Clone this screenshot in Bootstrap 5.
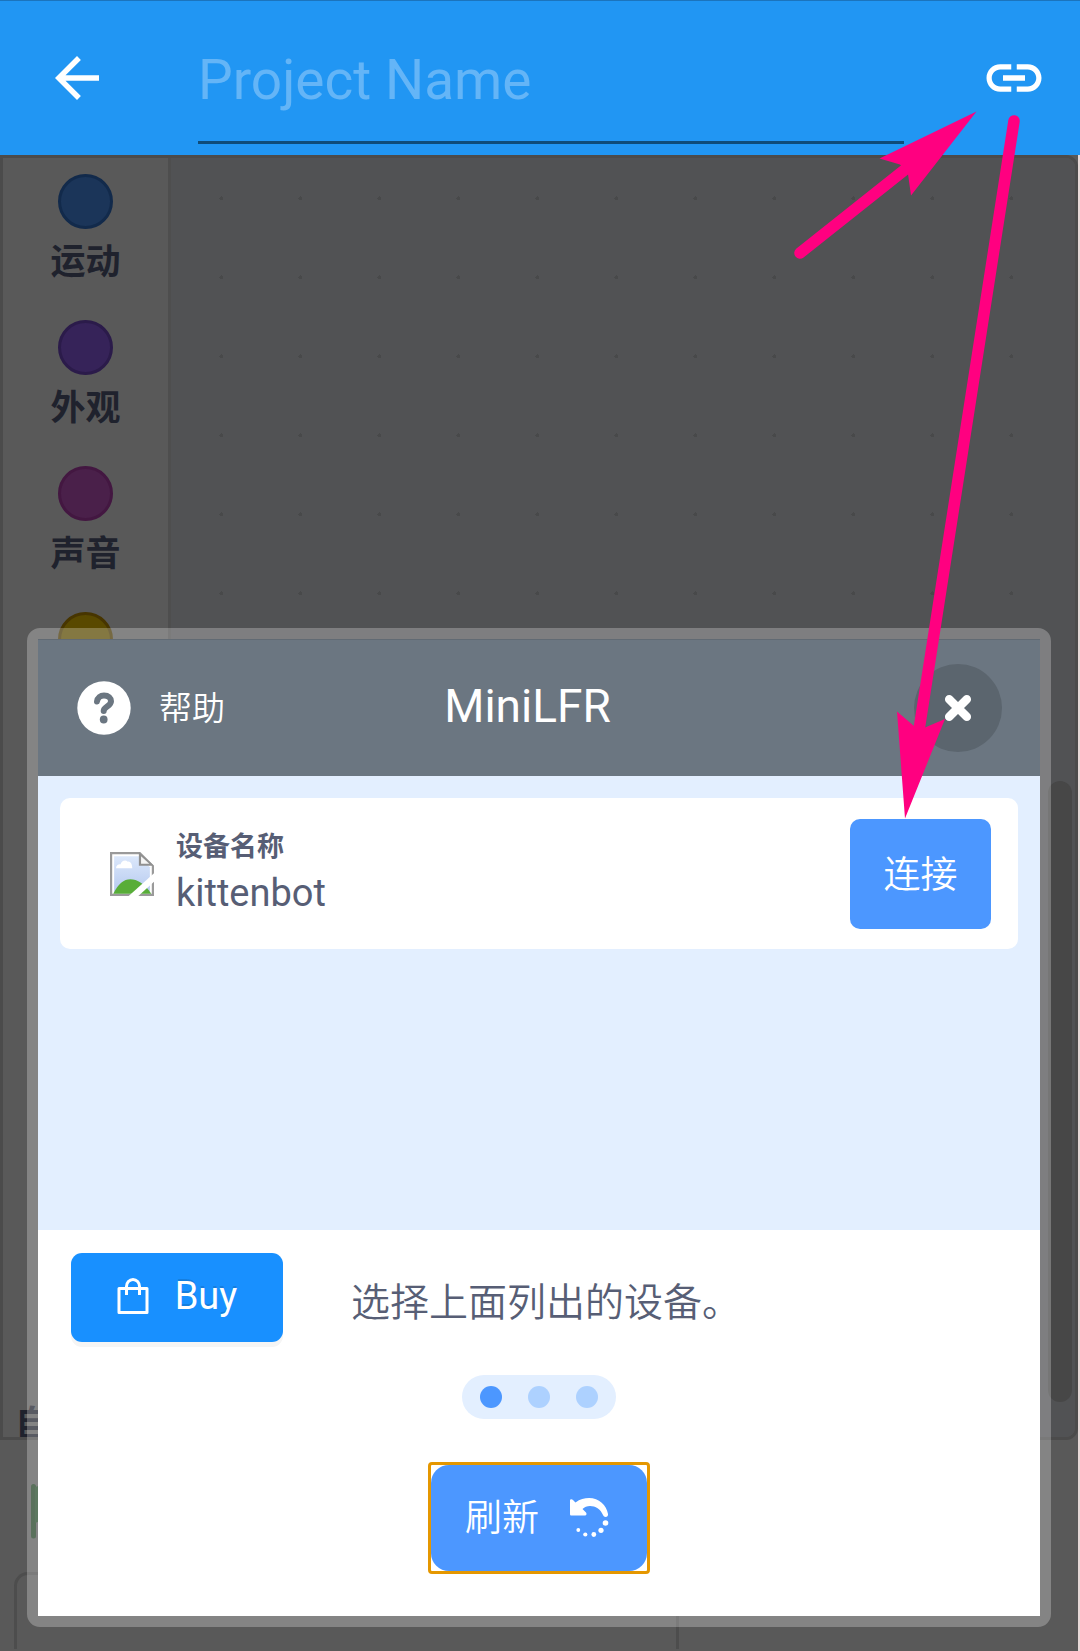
<!DOCTYPE html>
<html lang="zh-CN">
<head>
<meta charset="utf-8">
<meta name="viewport" content="width=device-width, initial-scale=1">
<title>Project</title>
<link href="https://cdn.jsdelivr.net/npm/bootstrap@5.3.0/dist/css/bootstrap.min.css" rel="stylesheet">
<style>
body{font-family:Roboto,"Noto Sans CJK SC",sans-serif;background:#e8d9d8;color:#575e75}
svg{display:block}
.screen{min-height:100vh}
.topbar{height:155px;background:#2196f3;border-top:1px solid #1b74bd;padding:0 33px 0 44px}
.topbar .btn{line-height:1}
.project-name{height:88px;min-width:0;font-size:55px;padding:0 0 38px;color:#fff;background:none;border:0;border-bottom:3px solid #0f4c79;border-radius:0;margin:44px 77px 0 88px}
.project-name:focus{background:none;box-shadow:none}
.project-name::placeholder{color:#64b5f7;opacity:1}
.editor{background:#595959;margin-right:2px}
.blocks{border:3px solid #4b4b4b;border-radius:0 12px 12px 0;min-height:1285px}
.toolbox{width:168px;border-right:3px solid #4e4e4e;padding-top:16px}
.category{height:146px;font-size:35px;line-height:52px;color:#1f222d;font-weight:700;text-decoration:none}
.swatch-dot{width:55px;height:55px;border:3px solid;border-radius:50%;margin-bottom:8px}
.motion{background:#1b3559;border-color:#122a4b}
.looks{background:#362359;border-color:#2b1b4a}
.sounds{background:#4a204a;border-color:#431741}
.events{background:#594900;border-color:#473500}
.own-blocks{font-size:35px;line-height:24px;font-weight:700;color:#1f222d;padding-left:12px}
.canvas-grid{background:#515254 radial-gradient(circle,#48494a 2px,transparent 2px) 11px 1px/79px 79px;padding-right:3px}
.canvas-grid .thumb{width:24px;height:621px;border-radius:12px;background:#474747;margin-top:623px}
.stage{height:211px;padding:42px 0 0 14px}
.stage svg{margin-left:17px}
.stage-pane{width:665px;height:77px;margin-top:31px;border:3px solid #4d4d4d;border-bottom:0;border-top-left-radius:14px}
.sheet-wrap{left:27px;right:29px;bottom:24px}
.sheet{border:11px solid rgba(255,255,255,.26);border-radius:13px;background-clip:padding-box}
.sheet-head{height:137px;background:#6b7681;color:#fff;padding:0 38px 0 39px;border-top:1px solid #616a73}
.help-btn{font-size:33px;font-weight:350;line-height:1;color:#fff;gap:28px;width:240px}
.sheet-title{font-size:46px;line-height:1;padding:0 24px 4px 0;font-weight:400}
.close-wrap{width:240px}
.round-close{width:88px;height:88px;border-radius:50%;background:#5b656e}
.device-list{min-height:454px;background:#e3efff;padding:22px}
.device{background:#fff;border-radius:10px;height:151px;padding:0 27px 0 50px;gap:22px}
.device-text{padding-top:3px}
.device-label{font-size:27px;line-height:36px;font-weight:700}
.device-name{font-size:38px;line-height:56px}
.act{background:#4c97ff;color:#fff;border:0;font-size:37px;font-weight:350;line-height:1}
.act:hover{background:#4280d7;color:#fff}
.connect{width:141px;height:110px;border-radius:10px}
.sheet-foot{background:#fff;height:386px;padding-top:23px}
.foot-row{padding-left:33px;gap:68px}
.buy{width:212px;height:89px;border-radius:11px;background:#1890ff;color:#fff;border:0;font-size:38px;line-height:1;gap:26px;box-shadow:0 5px 0 #f5f5f5;text-shadow:0 -2px 0 rgba(0,0,0,.12);padding:0 0 4px}
.buy:hover{background:#40a9ff;color:#fff}
.hint{font-size:39px;font-weight:350;line-height:44px;padding-top:10px}
.steps{width:154px;height:44px;border-radius:22px;background:#e3efff;gap:26px;margin-top:33px}
.steps i{width:22px;height:22px;border-radius:50%;background:#add1ff}
.steps .now{background:#4c97ff}
.refresh{width:216px;height:106px;border-radius:18px;gap:30px}
.ring{border-radius:1px;outline:3px solid #e59700}
.ring-box{margin-top:46px}
.marks{z-index:5;pointer-events:none;width:240px;right:50px;top:100px}
</style>
<script src="https://cdn.jsdelivr.net/npm/bootstrap@5.3.0/dist/js/bootstrap.bundle.min.js"></script>
</head>
<body>
<div class="screen d-flex flex-column position-relative">
  <header class="topbar d-flex align-items-center">
    <button class="btn p-0 border-0" type="button" aria-label="Back">
      <svg width="66" height="66" viewBox="0 0 24 24" fill="#fff"><path d="M20 11H7.830l5.590-5.590L12 4l-8 8 8 8 1.410-1.410L7.830 13H20v-2z"/></svg>
    </button>
    <input class="project-name form-control flex-grow-1 w-auto" type="text" placeholder="Project Name" aria-label="Project Name">
    <button class="btn p-0 border-0" type="button" aria-label="Link">
      <svg width="66" height="66" viewBox="0 0 24 24" fill="#fff"><path d="M3.900 12c0-1.710 1.390-3.100 3.100-3.100h4V7H7c-2.760 0-5 2.240-5 5s2.240 5 5 5h4v-1.900H7c-1.710 0-3.100-1.390-3.100-3.100zM8 13h8v-2H8v2zm9-6h-4v1.900h4c1.710 0 3.100 1.390 3.100 3.100s-1.390 3.100-3.100 3.100h-4V17h4c2.760 0 5-2.240 5-5s-2.240-5-5-5z"/></svg>
    </button>
  </header>

  <main class="editor flex-grow-1 d-flex flex-column">
    <div class="blocks flex-grow-1 d-flex overflow-hidden">
      <nav class="toolbox d-flex flex-column flex-shrink-0" aria-label="Blocks">
        <a class="category d-flex flex-column align-items-center" href="#"><span class="swatch-dot motion"></span>运动</a>
        <a class="category d-flex flex-column align-items-center" href="#"><span class="swatch-dot looks"></span>外观</a>
        <a class="category d-flex flex-column align-items-center" href="#"><span class="swatch-dot sounds"></span>声音</a>
        <a class="category d-flex flex-column align-items-center" href="#" aria-label="Events"><span class="swatch-dot events"></span></a>
        <div class="own-blocks mt-auto">自</div>
      </nav>
      <div class="canvas-grid flex-grow-1 d-flex justify-content-end">
        <div class="thumb"></div>
      </div>
    </div>
    <div class="stage">
      <svg width="50" height="59" viewBox="0 0 50 59"><path d="M2.500 4.500V54" stroke="#214024" stroke-width="5" stroke-linecap="round"/><path d="M4 5c14-5 24 8 44 0v34c-20 7-30-5-44 2z" fill="#254a29"/></svg>
      <div class="stage-pane"></div>
    </div>
  </main>

  <div class="sheet-wrap position-absolute">
    <section class="sheet" role="dialog" aria-labelledby="sheetTitle">
      <div class="sheet-head d-flex align-items-center">
        <button class="help-btn btn p-0 border-0 d-flex align-items-center" type="button">
          <svg width="54" height="54" viewBox="0 0 54 54"><circle cx="27" cy="27" r="26.700" fill="#fff"/><path d="M20 20.500c.5-4 3.500-6 7-6 4.500 0 7 2.500 7 5.800 0 5.200-7.300 5.200-7.300 9.700" fill="none" stroke="#6b7681" stroke-width="6" stroke-linecap="round" stroke-linejoin="round"/><circle cx="26.700" cy="38.500" r="3.900" fill="#6b7681"/></svg>
          帮助
        </button>
        <h1 class="sheet-title flex-grow-1 text-center mb-0" id="sheetTitle">MiniLFR</h1>
        <div class="close-wrap d-flex justify-content-end">
          <button class="round-close btn p-0 border-0 d-flex align-items-center justify-content-center" type="button" aria-label="Close">
            <svg width="28" height="28" viewBox="0 0 28 28"><path d="M5.200 5.200l17.600 17.600M22.800 5.200L5.200 22.800" stroke="#fff" stroke-width="8.500" stroke-linecap="round"/></svg>
          </button>
        </div>
      </div>
      <div class="device-list">
        <div class="device d-flex align-items-center">
          <svg width="44" height="44" viewBox="0 0 16 16"><defs><linearGradient id="sky" x1="0" y1="0" x2="0" y2="1"><stop offset="0" stop-color="#dce8fb"/><stop offset="1" stop-color="#b5c9ef"/></linearGradient></defs><path d="M0 0h11l5 5v11H0z" fill="#9a9a9a"/><path d="M.8.8h9.900L15.200 5v10.200H.8z" fill="#fff"/><path d="M1.500 1.500h9l4 4v9.500h-13z" fill="url(#sky)"/><path d="M2.200 5.900c0-1 .8-1.500 1.600-1.400.4-1.300 1.700-1.900 2.700-1 1.200-.2 1.600 1.400 1.600 2.400z" fill="#fff"/><path d="M1.200 15.200C3 11.500 5 9.900 7.400 9.900s5.300 1.600 7.600 5.300z" fill="#58ad38"/><path d="M10.500 0v5H16z" fill="#909090"/><path d="M11.300 1.500v2.800h3z" fill="#f5f5f5"/><path d="M6.800 16h3.500L16 10.800V7.700z" fill="#fff"/></svg>
          <div class="device-text flex-grow-1">
            <div class="device-label">设备名称</div>
            <div class="device-name">kittenbot</div>
          </div>
          <button class="btn act connect px-0 pb-0 pt-1" type="button">连接</button>
        </div>
      </div>
      <div class="sheet-foot">
        <div class="foot-row d-flex align-items-center">
          <button class="btn buy d-flex align-items-center justify-content-center" type="button">
            <svg width="32" height="38" viewBox="0 0 32 38" fill="none" stroke="#fff" stroke-width="3"><path d="M2 11.500h28v24H2zM9.500 18v-8.500a6.500 7 0 0 1 13 0V18" stroke-linejoin="round"/></svg>
            Buy
          </button>
          <div class="hint">选择上面列出的设备。</div>
        </div>
        <div class="steps d-flex align-items-center justify-content-center mx-auto"><i class="now"></i><i></i><i></i></div>
        <div class="ring-box d-flex justify-content-center">
          <div class="ring">
            <button class="btn act refresh d-flex align-items-center justify-content-center py-0 ps-0 pe-1" type="button">
              刷新
              <svg width="40" height="40" viewBox="0 0 40 40" fill="#fff"><path d="M1 2.500C1 1 3 .8 4 2l2.500 2.500C11 1 15.500 0 20 0c10 0 17.500 7 19 16 .5 3.500-4 4-5 1-2.500-6-7.500-9-13-9-3 0-5.500 1-7.500 3l3.500 3.500c1 1 .5 3-1 3H2.500C1.500 17.500 1 17 1 16z"/><circle cx="36.500" cy="25" r="2.800"/><circle cx="32" cy="32.300" r="2.600"/><circle cx="24.800" cy="36.500" r="2.400"/><circle cx="16.300" cy="36.500" r="2.100"/><circle cx="9.300" cy="32" r="1.900"/></svg>
            </button>
          </div>
        </div>
      </div>
    </section>
  </div>

  <!-- guide arrows: to the link button, then on to the connect button -->
  <svg class="marks position-absolute" height="730" viewBox="790 100 240 730" fill="#ff0080" stroke="#ff0080"><path d="M800 253L907 168" stroke-width="11.500" stroke-linecap="round"/><path d="M976.500 111.500L879.500 158.500L900 164.500L908 174L911 195.500z" stroke="none"/><path d="M1014 121L919 730" stroke-width="11.500" stroke-linecap="round"/><path d="M905 818.500L897 711.500L914 726L925 727.500L945 719z" stroke="none"/></svg>
</div>
</body>
</html>
